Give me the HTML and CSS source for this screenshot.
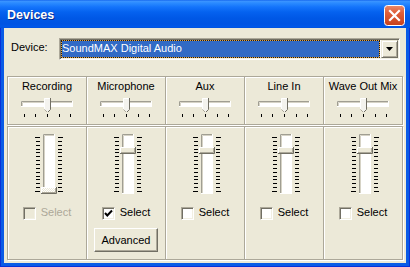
FILE: index.html
```html
<!DOCTYPE html>
<html lang="en">
<head>
    <meta charset="UTF-8">
    <title>Devices</title>
    <link rel="stylesheet" href="styles.css">
</head>
<body>
    <svg class="defs" width="0" height="0" aria-hidden="true">
        <defs>
            <linearGradient id="red" x1="0" y1="0" x2="0" y2="1">
                <stop offset="0" stop-color="#ea8b6c"/>
                <stop offset="0.35" stop-color="#e0603b"/>
                <stop offset="1" stop-color="#c7401c"/>
            </linearGradient>
            <pattern id="dither" width="2" height="2" patternUnits="userSpaceOnUse">
                <rect width="2" height="2" fill="#ece9d8"/>
                <rect width="1" height="1" fill="#fff"/>
                <rect x="1" y="1" width="1" height="1" fill="#fff"/>
            </pattern>
            <!-- horizontal balance slider -->
            <symbol id="hscale" viewBox="0 0 60 22">
                <rect x="4" y="5" width="52" height="6" fill="#fff"/>
                <path d="M4.5 11V5.5H56" stroke="#a09e92" fill="none"/>
                <path d="M5.5 10V6.5H55" stroke="#d6d3c6" fill="none"/>
                <path d="M55.5 5V10.5H4" stroke="#fff" fill="none"/>
                <path d="M7.5 18v3M18.5 18v3M30.5 18v3M42.5 18v3M53.5 18v3" stroke="#000"/>
            </symbol>
            <symbol id="hthumb" viewBox="0 0 7 14">
                <polygon points="0,0 7,0 7,11 3.5,14 0,11" fill="#f4f3ee"/>
                <path d="M0.5 11V0.5H6" stroke="#fff" fill="none"/>
                <path d="M6.5 0V11.5L3.5 14.5" stroke="#716f64" fill="none"/>
                <path d="M0.5 11.5L3 14" stroke="#aca899" fill="none"/>
            </symbol>
            <!-- vertical volume slider -->
            <symbol id="vscale" viewBox="0 0 32 64">
                <rect x="10" y="2" width="12" height="60" fill="#fff"/>
                <path d="M10.5 62V2.5H22" stroke="#a09e92" fill="none"/>
                <path d="M11.5 61V3.5H21" stroke="#d6d3c6" fill="none"/>
                <path d="M21.5 2V61.5H10" stroke="#fff" fill="none"/>
                <path d="M2 5.5h5M3 9.5h4M3 13.5h4M3 17.5h4M3 20.5h4M3 24.5h4M3 28.5h4M3 32.5h4M3 36.5h4M3 40.5h4M3 44.5h4M3 47.5h4M3 51.5h4M3 55.5h4M2 59.5h5" stroke="#000"/>
                <path d="M25 5.5h5M25 9.5h4M25 13.5h4M25 17.5h4M25 20.5h4M25 24.5h4M25 28.5h4M25 32.5h4M25 36.5h4M25 40.5h4M25 44.5h4M25 47.5h4M25 51.5h4M25 55.5h4M25 59.5h5" stroke="#000"/>
            </symbol>
            <symbol id="vthumb" viewBox="0 0 16 7">
                <rect width="16" height="7" fill="#ece9d8"/>
                <path d="M0.5 6V0.5H15" stroke="#fff" fill="none"/>
                <path d="M14.5 1V5.5H1" stroke="#aca899" fill="none"/>
                <path d="M15.5 0V6.5H0" stroke="#716f64" fill="none"/>
            </symbol>
            <symbol id="vthumb-off" viewBox="0 0 16 7">
                <rect width="16" height="7" fill="url(#dither)"/>
                <path d="M0.5 6V0.5H15" stroke="#fff" fill="none"/>
                <path d="M14.5 1V5.5H1" stroke="#aca899" fill="none"/>
                <path d="M15.5 0V6.5H0" stroke="#716f64" fill="none"/>
            </symbol>
        </defs>
    </svg>

    <div class="window">
        <div class="titlebar">
            <span class="title">Devices</span>
            <div class="close">
                <svg width="21" height="21" viewBox="0 0 21 21">
                    <rect x="0.5" y="0.5" width="20" height="20" rx="3" fill="url(#red)" stroke="#fff"/>
                    <path d="M6 6L15 15M15 6L6 15" stroke="#fff" stroke-width="2.2" stroke-linecap="square"/>
                </svg>
            </div>
        </div>

        <div class="client">
            <div class="device-row">
                <span class="device-label">Device:</span>
                <div class="combo">
                    <div class="combo-sel"><div class="combo-text">SoundMAX Digital Audio</div></div>
                    <div class="combo-drop">
                        <svg width="7" height="4" viewBox="0 0 7 4"><polygon points="0,0 7,0 3.5,4" fill="#000"/></svg>
                    </div>
                </div>
            </div>

            <div class="mixer">
                <div class="row row-top">
                    <div class="cell head">
                        <span class="name">Recording</span>
                        <svg class="hslider" width="60" height="22"><use href="#hscale" width="60" height="22"/><use href="#hthumb" x="27" y="2" width="7" height="14"/></svg>
                    </div>
                    <div class="cell head">
                        <span class="name">Microphone</span>
                        <svg class="hslider" width="60" height="22"><use href="#hscale" width="60" height="22"/><use href="#hthumb" x="27" y="2" width="7" height="14"/></svg>
                    </div>
                    <div class="cell head">
                        <span class="name">Aux</span>
                        <svg class="hslider" width="60" height="22"><use href="#hscale" width="60" height="22"/><use href="#hthumb" x="27" y="2" width="7" height="14"/></svg>
                    </div>
                    <div class="cell head">
                        <span class="name">Line In</span>
                        <svg class="hslider" width="60" height="22"><use href="#hscale" width="60" height="22"/><use href="#hthumb" x="27" y="2" width="7" height="14"/></svg>
                    </div>
                    <div class="cell head">
                        <span class="name">Wave Out Mix</span>
                        <svg class="hslider" width="60" height="22"><use href="#hscale" width="60" height="22"/><use href="#hthumb" x="27" y="2" width="7" height="14"/></svg>
                    </div>
                </div>

                <div class="row row-bottom">
                    <div class="cell body">
                        <svg class="vslider" width="32" height="64"><use href="#vscale" width="32" height="64"/><use href="#vthumb-off" x="8" y="55" width="16" height="7"/></svg>
                        <div class="check disabled"><span class="box"></span><span class="label">Select</span></div>
                    </div>
                    <div class="cell body">
                        <svg class="vslider" width="32" height="64"><use href="#vscale" width="32" height="64"/><use href="#vthumb" x="8" y="15" width="16" height="7"/></svg>
                        <div class="check"><span class="box"><svg width="11" height="11" viewBox="0 0 11 11"><path d="M2 5L4.3 7.5L9 2.5" stroke="#000" stroke-width="2" fill="none"/></svg></span><span class="label">Select</span></div>
                        <div class="btn">Advanced</div>
                    </div>
                    <div class="cell body">
                        <svg class="vslider" width="32" height="64"><use href="#vscale" width="32" height="64"/><use href="#vthumb" x="8" y="15" width="16" height="7"/></svg>
                        <div class="check"><span class="box"></span><span class="label">Select</span></div>
                    </div>
                    <div class="cell body">
                        <svg class="vslider" width="32" height="64"><use href="#vscale" width="32" height="64"/><use href="#vthumb" x="8" y="15" width="16" height="7"/></svg>
                        <div class="check"><span class="box"></span><span class="label">Select</span></div>
                    </div>
                    <div class="cell body">
                        <svg class="vslider" width="32" height="64"><use href="#vscale" width="32" height="64"/><use href="#vthumb" x="8" y="15" width="16" height="7"/></svg>
                        <div class="check"><span class="box"></span><span class="label">Select</span></div>
                    </div>
                </div>
            </div>
        </div>
    </div>
</body>
</html>
```

FILE: styles.css
```css
* {
    margin: 0;
    padding: 0;
    box-sizing: border-box;
}

body {
    width: 410px;
    height: 267px;
    overflow: hidden;
    font-family: "Liberation Sans", Arial, sans-serif;
    font-size: 11px;
    color: #000;
    background: #ece9d8;
}

.defs {
    position: absolute;
    width: 0;
    height: 0;
}

/* Window frame */
.window {
    width: 410px;
    height: 267px;
    display: flex;
    flex-direction: column;
    background: #0a5be6;
    box-shadow: inset 0 0 0 1px #0831d9;
}

.titlebar {
    height: 29px;
    display: flex;
    align-items: center;
    justify-content: space-between;
    padding: 0 5px 0 7px;
    background: linear-gradient(to bottom, #0a5ae9 0, #3d95ff 1px, #2b8bff 3px, #1474fb 7px, #0562ef 12px, #0058e6 18px, #0054e3 24px, #0058ea 27px, #0046cc 29px);
}

.title {
    margin-top: 2px;
    color: #fff;
    font-size: 12.5px;
    font-weight: bold;
    text-shadow: 1px 1px 0 #0b2a8a;
}

.close {
    width: 21px;
    height: 21px;
    margin-top: 2px;
}

.close svg {
    display: block;
}

/* Client area */
.client {
    flex: 1;
    margin: 0 4px 4px;
    padding: 0 3px 3px;
    background: #ece9d8;
    display: flex;
    flex-direction: column;
}

.device-row {
    display: flex;
    align-items: flex-start;
    margin-top: 10px;
    padding: 0 3px 0 4px;
}

.device-label {
    width: 48px;
    margin-top: 3px;
    line-height: 13px;
}

.combo {
    flex: 1;
    height: 22px;
    display: flex;
    background: #fff;
    border: 1px solid;
    border-color: #aca899 #fff #fff #aca899;
    box-shadow: inset 1px 1px 0 #716f64, inset -1px -1px 0 #f1efe2;
    padding: 1px;
}

.combo-sel {
    flex: 1;
    margin-right: 1px;
    background: #e8a43c;
}

.combo-text {
    height: 100%;
    border: 1px dotted #1a1a1a;
    background: #316ac5;
    background-clip: padding-box;
    color: #fff;
    line-height: 13px;
    padding: 1px 0 0 0;
    white-space: nowrap;
}

.combo-drop {
    width: 17px;
    display: flex;
    align-items: center;
    justify-content: center;
    background: #ece9d8;
    border: 1px solid;
    border-color: #ece9d8 #716f64 #716f64 #ece9d8;
    box-shadow: inset 1px 1px 0 #fff, inset -1px -1px 0 #aca899;
}

.combo-drop svg {
    display: block;
}

/* Mixer panel */
.mixer {
    margin-top: 16px;
    display: flex;
    flex-direction: column;
}

.row {
    display: flex;
    border: 1px solid #aca899;
    box-shadow: inset 1px 1px 0 #fff, 1px 1px 0 #fff;
}

.row-top {
    height: 49px;
}

.row-bottom {
    height: 134px;
    margin-top: 1px;
}

.cell {
    flex: 1 1 0;
    min-width: 0;
    display: flex;
    flex-direction: column;
    align-items: center;
}

.cell + .cell {
    border-left: 1px solid #aca899;
    box-shadow: inset 1px 0 0 #fff;
}

.head {
    padding-top: 3px;
}

.name {
    line-height: 13px;
    white-space: nowrap;
}

.hslider {
    display: block;
    margin-top: 3px;
}

.body {
    padding-top: 5px;
}

.vslider {
    display: block;
    margin-left: 4px;
}

.check {
    display: flex;
    align-items: flex-start;
    gap: 5px;
    height: 13px;
    margin-top: 11px;
}

.box {
    width: 13px;
    height: 13px;
    display: flex;
    align-items: center;
    justify-content: center;
    background: #fff;
    border: 1px solid;
    border-color: #aca899 #fff #fff #aca899;
    box-shadow: inset 1px 1px 0 #716f64, inset -1px -1px 0 #f1efe2;
}

.box svg {
    display: block;
}

.label {
    line-height: 11px;
}

.check.disabled .box {
    background: #ece9d8;
}

.check.disabled .label {
    color: #aca899;
}

.btn {
    margin-top: 8px;
    width: 64px;
    height: 24px;
    display: flex;
    align-items: center;
    justify-content: center;
    line-height: 13px;
    background: #ece9d8;
    border: 1px solid;
    border-color: #fff #716f64 #716f64 #fff;
    box-shadow: inset -1px -1px 0 #aca899;
}
```
